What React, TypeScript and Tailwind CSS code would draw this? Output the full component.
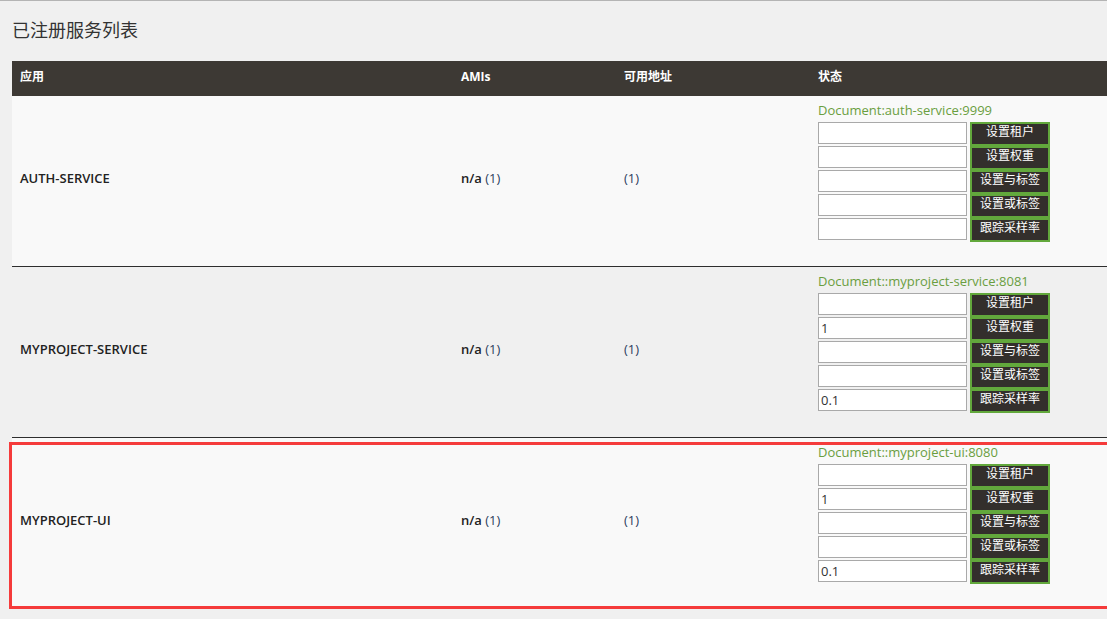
import React from "react";

type Svc = {
  name: string;
  doc: string;
  values: string[];
  striped: boolean;
};

const services: Svc[] = [
  { name: "AUTH-SERVICE", doc: "Document:auth-service:9999", values: ["", "", "", "", ""], striped: true },
  { name: "MYPROJECT-SERVICE", doc: "Document::myproject-service:8081", values: ["", "1", "", "", "0.1"], striped: false },
  { name: "MYPROJECT-UI", doc: "Document::myproject-ui:8080", values: ["", "1", "", "", "0.1"], striped: true },
];

const actions = ["设置租户", "设置权重", "设置与标签", "设置或标签", "跟踪采样率"];

const font = { fontFamily: '"Open Sans", "Noto Sans CJK SC", sans-serif' };

export default function App() {
  return (
    <div className="relative min-h-screen bg-[#f0f0f0] border-t border-[#b4b4b4] pl-3" style={font}>
      <h1 className="pt-[17px] text-[18px] leading-6 font-normal text-[#333]">已注册服务列表</h1>
      <table className="mt-[19px] w-full border-collapse text-left">
        <colgroup>
          <col className="w-[441px]" />
          <col className="w-[163px]" />
          <col className="w-[194px]" />
          <col />
        </colgroup>
        <thead>
          <tr className="bg-[#3d3934] text-white text-[12px] font-bold">
            <th className="h-[35px] pl-2 pb-[4px] align-middle">应用</th>
            <th className="h-[35px] pl-2 pb-[4px] align-middle">AMIs</th>
            <th className="h-[35px] pl-2 pb-[4px] align-middle">可用地址</th>
            <th className="h-[35px] pl-2 pb-[4px] align-middle">状态</th>
          </tr>
        </thead>
        <tbody>
          {services.map((s, i) => (
            <tr
              key={s.name}
              className={`${s.striped ? "bg-[#f9f9f9]" : "bg-[#f0f0f0]"} ${i < services.length - 1 ? "border-b border-[#2e2e2e]" : ""}`}
            >
              <td className="pl-2 pb-1 align-middle text-[13px] font-semibold text-[#222]">{s.name}</td>
              <td className="pl-2 pb-1 align-middle text-[13px] text-[#222]">
                <b className="font-semibold">n/a</b> <span className="text-[#2c3e5e]">(1)</span>
              </td>
              <td className="pl-2 pb-1 align-middle text-[13px] text-[#2c3e5e]">(1)</td>
              <td className="pl-2 pt-1 pb-6 align-top">
                <div className="text-[13px] leading-5 text-[#6a9e3f]">{s.doc}</div>
                <div className="mt-0.5 flex flex-col">
                  {actions.map((a, k) => (
                    <div key={a} className="flex h-6 items-start gap-[3px]">
                      <input
                        readOnly
                        value={s.values[k]}
                        className="h-[22px] w-[149px] border border-[#a9a9a9] bg-white px-[2px] text-[13px] text-[#333] outline-none"
                        style={font}
                      />
                      <button
                        className="flex h-6 w-20 items-start justify-center border-2 border-[#62a83c] bg-[#332f2c] text-[12px] leading-[15px] text-white"
                        style={font}
                      >
                        {a}
                      </button>
                    </div>
                  ))}
                </div>
              </td>
            </tr>
          ))}
        </tbody>
      </table>
      <div className="pointer-events-none absolute left-[9px] top-[441px] h-[167px] w-[1110px] border-[3px] border-[#f53b3b]" />
    </div>
  );
}
